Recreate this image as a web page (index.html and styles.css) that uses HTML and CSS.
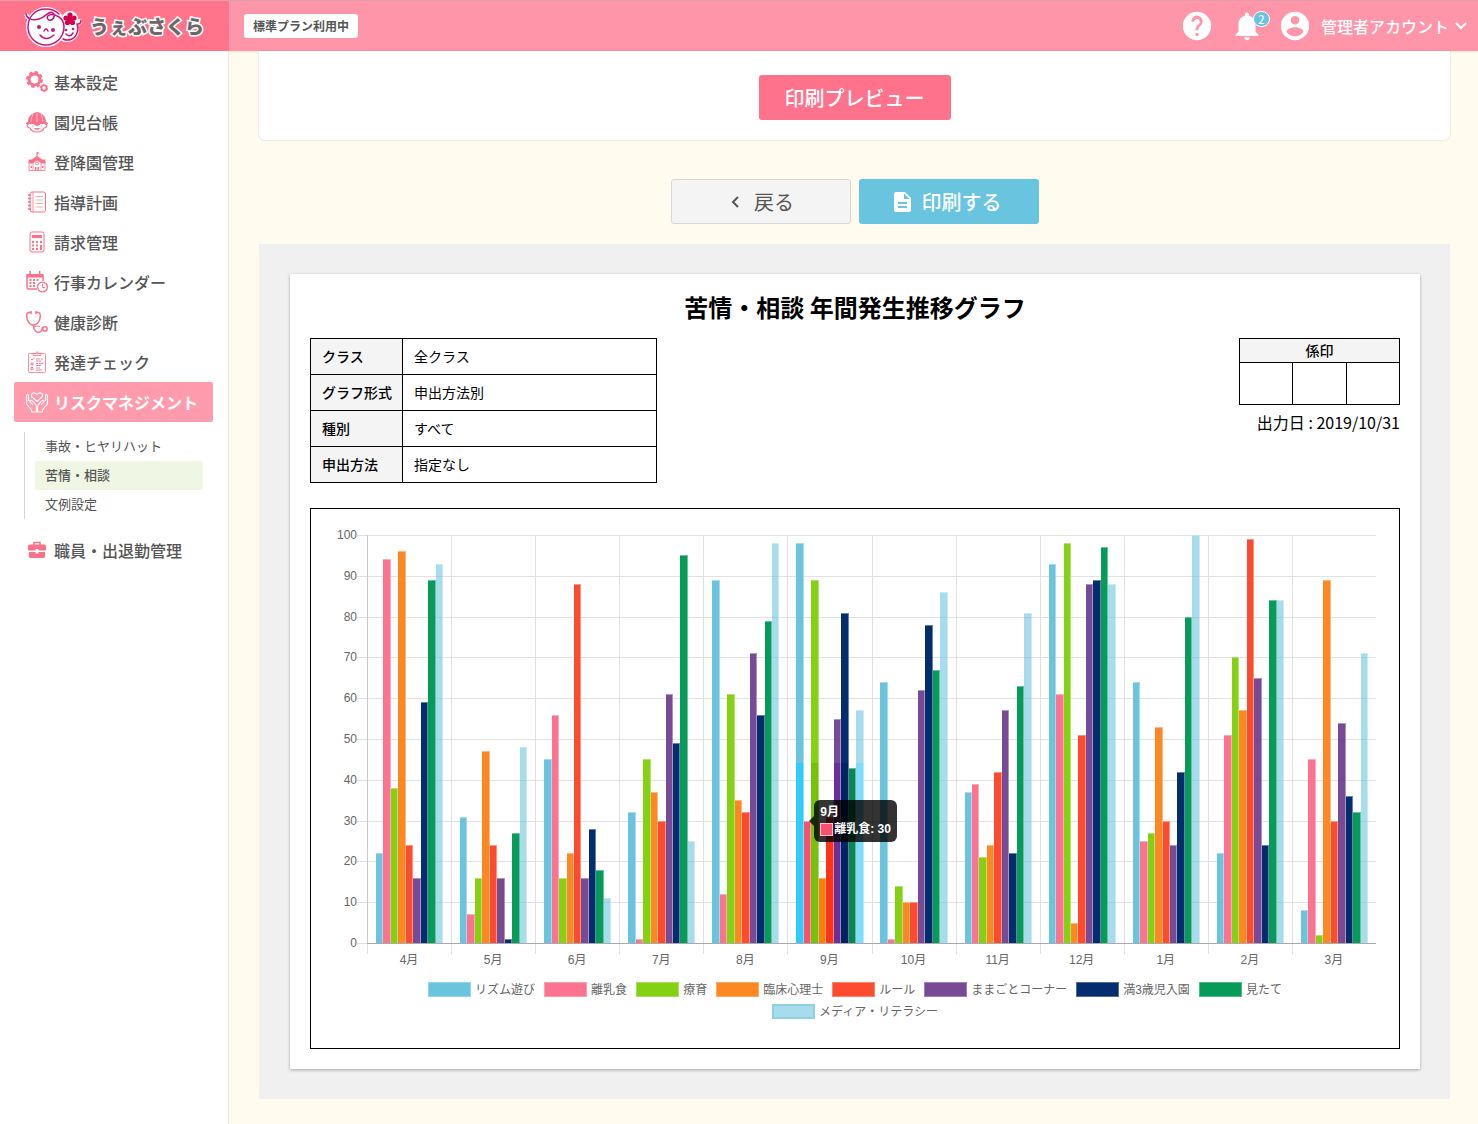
FILE: index.html
```html
<!DOCTYPE html>
<html lang="ja">
<head>
<meta charset="utf-8">
<meta name="viewport" content="width=device-width, initial-scale=1">
<title>苦情・相談 年間発生推移グラフ | うぇぶさくら</title>
<link rel="stylesheet" href="styles.css">
</head>
<body>
<header class="header">
  <a class="brand" href="#">
    <svg class="brand-mark" viewBox="0 0 58 42" aria-hidden="true">
      <g fill="#fff" stroke="#fff" stroke-width="4" stroke-linejoin="round">
        <circle cx="22" cy="22" r="18"/><circle cx="43" cy="25" r="10"/><circle cx="46" cy="14" r="6"/>
        <path d="M2 9q2 6 8 5M50 17q7 4 6-3" fill="none"/>
      </g>
      <g fill="none" stroke="#c4177c" stroke-width="1.5" stroke-linecap="round">
        <path d="M2 9c1 5 7 7 13 5 7-2 10-9 14-6 3 3 0 8-4 7-4-2-1-7 6-5 6 2 9 7 9 12a18 18 0 1 1-36 0c0-9 6-18 18-18 5 0 9 1 13 5"/>
        <path d="M39 34a10 10 0 0 0 14-6c2-4 1-6 0-9M54 19c2 0 3-2 3-4"/>
        <path d="M16 30q6 7 14 0M20 26q2-4 4 0M42 29q4 4 7-1"/>
      </g>
      <circle cx="15" cy="22" r="2" fill="#c4177c"/><circle cx="29" cy="25" r="2" fill="#c4177c"/>
      <circle cx="42" cy="25" r="1.300" fill="#c4177c"/><circle cx="49" cy="24" r="1.300" fill="#c4177c"/>
      <g fill="#d3004c"><circle cx="46" cy="10" r="2.600"/><circle cx="50" cy="13" r="2.600"/><circle cx="48.500" cy="17.500" r="2.600"/><circle cx="43.500" cy="17.500" r="2.600"/><circle cx="42" cy="13" r="2.600"/><circle cx="46" cy="14" r="2.600"/></g>
    </svg>
    <span class="brand-name">うぇぶさくら</span>
  </a>
  <div class="header-bar">
    <span class="plan">標準プラン利用中</span>
    <nav class="tools" aria-label="アカウント">
      <button class="tool tool-help" type="button" aria-label="ヘルプ">
        <svg viewBox="0 0 24 24"><path d="M12 2a10 10 0 1 0 0 20 10 10 0 0 0 0-20zm1 17h-2v-2h2v2zm2.070-7.750-.9.920C13.450 12.900 13 13.500 13 15h-2v-.5c0-1.100.45-2.100 1.170-2.830l1.240-1.260A2 2 0 1 0 10 9H8a4 4 0 1 1 7.070 2.250z"/></svg>
      </button>
      <button class="tool tool-bell" type="button" aria-label="お知らせ">
        <svg viewBox="0 0 24 24"><path d="M12 22a2 2 0 0 0 2-2h-4c0 1.100.9 2 2 2zm6-6v-5c0-3.070-1.630-5.640-4.500-6.320V4a1.500 1.500 0 0 0-3 0v.68C7.640 5.360 6 7.920 6 11v5l-2 2v1h16v-1l-2-2z"/></svg>
        <span class="badge">2</span>
      </button>
      <button class="account" type="button">
        <svg class="account-icon" viewBox="0 0 24 24"><path d="M12 2a10 10 0 1 0 0 20 10 10 0 0 0 0-20zm0 3a3 3 0 1 1 0 6 3 3 0 0 1 0-6zm0 14.200a7.200 7.200 0 0 1-6-3.220c.03-1.990 4-3.080 6-3.080 1.990 0 5.970 1.090 6 3.080a7.200 7.200 0 0 1-6 3.220z"/></svg>
        <span>管理者アカウント</span>
        <svg class="chevron" viewBox="0 0 12 8"><path d="M1 1l5 5 5-5"/></svg>
      </button>
    </nav>
  </div>
</header>

<div class="layout">
  <nav class="sidebar" aria-label="メニュー">
    <a class="menu-item" href="#">
      <svg viewBox="0 0 22 22"><circle cx="8.500" cy="8.500" r="5.500" fill="none" stroke="currentColor" stroke-width="3"/><circle cx="8.500" cy="8.500" r="7.500" fill="none" stroke="currentColor" stroke-width="1.800" stroke-dasharray="3.400 2.490"/><circle cx="18" cy="17" r="2.600" fill="none" stroke="currentColor" stroke-width="1.800"/><circle cx="18" cy="17" r="3.600" fill="none" stroke="currentColor" stroke-width="1" stroke-dasharray="1.800 1.970"/></svg>
      <span>基本設定</span></a>
    <a class="menu-item" href="#">
      <svg viewBox="0 0 22 22"><path d="M2 11C2 5 6 2 11 1c5 1 9 4 9 10l2 1v1H0v-1z" fill="currentColor"/><path d="M7 3q-2 4-2 8M11 2v9M15 3q2 4 2 8" stroke="#fff" stroke-width=".5" fill="none"/><path d="M3 13c-3 0-2 4 1 4 1 3 4 4 7 4s6-1 7-4c3 0 4-4 1-4" fill="none" stroke="currentColor" stroke-width="1.100"/><path d="M8 13l3 2 3-2zM8.500 17.500h5q-2.500 2-5 0M6 15h1.500M14.500 15H16" fill="currentColor" stroke="currentColor" stroke-width=".8"/></svg>
      <span>園児台帳</span></a>
    <a class="menu-item" href="#">
      <svg viewBox="0 0 22 22"><path d="M11 1l3 1-2.500 1v2L16 8.500h3l1 4h-4.500L11 9.500 6.500 12.500H2l1-4h3L10.500 5V1z" fill="currentColor"/><path d="M3 13v6.500h16V13M7 12v7.500M15 12v7.500" fill="none" stroke="currentColor" stroke-width=".8"/><circle cx="11" cy="12.500" r="1.500" fill="none" stroke="currentColor" stroke-width=".8"/><path d="M4.500 15h1.500v2H4.500zM16 15h1.500v2H16zM9 16h1.500v3.500H9zM11.500 16H13v3.500h-1.500z" fill="currentColor"/></svg>
      <span>登降園管理</span></a>
    <a class="menu-item" href="#">
      <svg viewBox="0 0 22 22" fill="none" stroke="currentColor"><rect x="4" y="1" width="15.500" height="20" rx="2"/><path d="M7 1v20" stroke-width=".8"/><path d="M2 4h3M2 7.500h3M2 11h3M2 14.500h3M2 18h3" stroke-width="1.500"/><path d="M9.500 5.500h7.500M9.500 9h7.500M9.500 12.500h7.500M9.500 16h7.500" stroke-width=".6"/></svg>
      <span>指導計画</span></a>
    <a class="menu-item" href="#">
      <svg viewBox="0 0 22 22"><rect x="4" y="1" width="14" height="20" rx="2" fill="none" stroke="currentColor"/><path d="M6 4h10v3H6zM6 10h2v2H6zM10 10h2v2h-2zM14 10h2v2h-2zM6 13.500h2v2H6zM10 13.500h2v2h-2zM6 17h2v2H6zM10 17h2v2h-2zM14 14h2v5h-2z" fill="currentColor"/></svg>
      <span>請求管理</span></a>
    <a class="menu-item" href="#">
      <svg viewBox="0 0 22 22"><path d="M11 18H2.500Q1 18 1 16.500V4h16v6" fill="none" stroke="currentColor" stroke-width="1.500"/><path d="M1 3h16v3.500H1zM3.500 0h1.500v4H3.500zM13 0h1.500v4H13zM3.500 8h2v2h-2zM7 8h2v2H7zM10.500 8h2v2h-2zM3.500 11h2v2h-2zM7 11h2v2H7zM3.500 14h2v2h-2zM7 14h2v2H7z" fill="currentColor"/><circle cx="16.500" cy="16" r="4.900" fill="#fff" stroke="currentColor" stroke-width="1.300"/><path d="M16.500 13v3.500H19" fill="none" stroke="currentColor"/></svg>
      <span>行事カレンダー</span></a>
    <a class="menu-item" href="#">
      <svg viewBox="0 0 22 22" fill="none" stroke="currentColor" stroke-width="1.500"><path d="M4.500 1.500H2.500C0 2 .5 6 1.500 9q2 5 6 5T13.500 9c1-3 1.500-7-1-7.500h-2M5 0v3M10 0v3M7.500 14c0 9 8 9 8.500 4q0-1.500 1-1.500"/><circle cx="19" cy="18" r="2.200"/><path d="M8 16c1-1 4-1 6-.5" stroke-width="1"/></svg>
      <span>健康診断</span></a>
    <a class="menu-item" href="#">
      <svg viewBox="0 0 22 22" fill="none" stroke="currentColor"><rect x="2.500" y="2.500" width="17" height="19" rx="1" stroke-width=".8"/><path d="M7 4.500v-2h2.500l1.500-2 1.500 2H15v2z" stroke-width=".8"/><path d="M5 8l1 1 2-2.500M5 12h2v2H5zM5 16.500h2v2H5zM10 8h4M15 8h2M10 10h5M10 12.500h2M13 12.500h4M10 14.500h5M10 17h4M10 19h6" stroke-width=".9"/></svg>
      <span>発達チェック</span></a>
    <a class="menu-item is-active" href="#" aria-current="true">
      <svg viewBox="0 0 22 22" fill="none" stroke="currentColor" stroke-width="1.100" stroke-linejoin="round"><path d="M11 10.500L6 6C4 3 8 0 11 3.500 14 0 18 3 16 6z"/><path d="M.6 4v9l5 6v2h4.800v-5c0-3-4-6-5-6.500s-2 0-1.500 1L7 14M2.500 10V4Q1.500 3 .6 4M21.400 4v9l-5 6v2h-4.800v-5c0-3 4-6 5-6.500s2 0 1.500 1L15 14M19.500 10V4q1-1 1.900 0"/></svg>
      <span>リスクマネジメント</span></a>
    <div class="submenu">
      <a class="submenu-item" href="#">事故・ヒヤリハット</a>
      <a class="submenu-item is-current" href="#" aria-current="page">苦情・相談</a>
      <a class="submenu-item" href="#">文例設定</a>
    </div>
    <a class="menu-item" href="#">
      <svg viewBox="0 0 22 22"><path d="M8 6V3.500h6V6" fill="none" stroke="currentColor" stroke-width="1.500"/><path d="M3.500 5.500h15A1.500 1.500 0 0 1 20 7v4.500h-7.500V10h-3v1.500H2V7a1.500 1.500 0 0 1 1.500-1.500zM3 13h6.500v1.500h3V13H19v4.500a1.500 1.500 0 0 1-1.500 1.500h-13A1.500 1.500 0 0 1 3 17.500z" fill="currentColor"/></svg>
      <span>職員・出退勤管理</span></a>
  </nav>

  <main class="main">
    <section class="card">
      <button class="btn btn-preview" type="button">印刷プレビュー</button>
    </section>
    <div class="actions">
      <button class="btn btn-back" type="button">
        <svg class="back-icon" viewBox="0 0 8 12"><path d="M7 1L2 6l5 5"/></svg>戻る</button>
      <button class="btn btn-print" type="button">
        <svg class="file-icon" viewBox="0 0 18 20"><path d="M2 0h9l6 6v12q0 2-2 2H2q-2 0-2-2V2q0-2 2-2zm8 1.500V7h5.500zM4 10v2h9v-2zm0 4v2h9v-2z" fill-rule="evenodd"/></svg>印刷する</button>
    </div>

    <section class="preview">
      <article class="sheet">
        <h1 class="title">苦情・相談 年間発生推移グラフ</h1>
        <div class="meta">
          <table class="conditions">
            <tr><th scope="row">クラス</th><td>全クラス</td></tr>
            <tr><th scope="row">グラフ形式</th><td>申出方法別</td></tr>
            <tr><th scope="row">種別</th><td>すべて</td></tr>
            <tr><th scope="row">申出方法</th><td>指定なし</td></tr>
          </table>
          <div class="approval">
            <table class="stamps">
              <tr><th colspan="3">係印</th></tr>
              <tr><td></td><td></td><td></td></tr>
            </table>
            <p class="date">出力日 : 2019/10/31</p>
          </div>
        </div>

        <figure class="chart">
          <div class="chart-grid">
            <ol class="y-axis"><li>100</li><li>90</li><li>80</li><li>70</li><li>60</li><li>50</li><li>40</li><li>30</li><li>20</li><li>10</li><li>0</li></ol>
            <div class="plot">
              <div class="gridlines"><i></i><i></i><i></i><i></i><i></i><i></i><i></i><i></i><i></i><i></i><i></i></div>
              <div class="groups" id="groups"></div>
            </div>
            <ol class="x-axis"><li>4月</li><li>5月</li><li>6月</li><li>7月</li><li>8月</li><li>9月</li><li>10月</li><li>11月</li><li>12月</li><li>1月</li><li>2月</li><li>3月</li></ol>
          </div>
          <ul class="legend">
            <li class="s1">リズム遊び</li><li class="s2">離乳食</li><li class="s3">療育</li><li class="s4">臨床心理士</li><li class="s5">ルール</li><li class="s6">ままごとコーナー</li><li class="s7">満3歳児入園</li><li class="s8">見たて</li><li class="s9">メディア・リテラシー</li>
          </ul>
        </figure>
      </article>
    </section>
  </main>
</div>

<template id="tooltip">
  <div class="tooltip" role="tooltip">
    <div>9月</div>
    <div class="tooltip-row"><span class="tooltip-key"></span>離乳食: 30</div>
  </div>
</template>
<script src="chart.js"></script>
</body>
</html>
```
FILE: styles.css
```css
*, *::before, *::after { box-sizing: border-box; }

body {
  margin: 0;
  min-height: 100vh;
  display: flex;
  flex-direction: column;
  background: #fffbee;
  color: #555;
  font-family: "Noto Sans CJK JP", sans-serif;
  font-size: 16px;
  line-height: 24px;
}

a { color: inherit; text-decoration: none; }
button { border: 0; padding: 0; background: none; font: inherit; color: inherit; cursor: pointer; }
ol, ul { list-style: none; margin: 0; padding: 0; }

/* header */
.header {
  display: flex;
  height: 51px;
  color: #fff;
  background: #ff95a8;
  box-shadow: 0 1px 2px rgba(0, 0, 0, .1);
  border-top: 1px solid #dd9eaa;
}
.brand {
  flex: 0 0 229px;
  display: flex;
  align-items: center;
  gap: 8px;
  padding-left: 24px;
  background: #ff748b;
}
.brand-mark { width: 58px; height: 42px; }
.brand-name {
  font-size: 19px;
  font-weight: 900;
  color: #6e6668;
  -webkit-text-stroke: 3px #fff;
  paint-order: stroke fill;
}
.header-bar {
  flex: 1;
  display: flex;
  align-items: center;
  justify-content: space-between;
  padding: 0 11px 0 15px;
}
.plan {
  height: 24px;
  padding: 0 9px;
  border-radius: 3px;
  background: #fff;
  color: #555;
  font-size: 12px;
  font-weight: 700;
}
.tools { display: flex; align-items: center; gap: 16px; fill: #fff; }
.tool { position: relative; height: 34px; }
.tool svg, .account-icon { display: block; width: 34px; height: 34px; }
.badge {
  position: absolute;
  top: 2px;
  right: -6px;
  width: 17px;
  height: 16px;
  border: 1px solid #fff;
  border-radius: 8px;
  background: #68c4df;
  color: #fff;
  font-size: 11px;
  font-weight: 500;
  line-height: 14px;
  text-align: center;
}
.account { display: flex; align-items: center; margin-left: -2px; }
.account span { margin: 0 6px 0 9px; font-weight: 500; }
.chevron { width: 12px; height: 8px; fill: none; stroke: #fff; stroke-width: 2; }

/* frame */
.layout { flex: 1; display: flex; }
.sidebar {
  flex: 0 0 229px;
  padding: 11px 15px 12px 14px;
  background: #fff;
  border-right: 1px solid #e9e9e9;
}
.menu-item {
  display: flex;
  align-items: center;
  gap: 6px;
  height: 40px;
  padding-left: 12px;
  border-radius: 2px;
  font-weight: 500;
}
.menu-item svg { width: 22px; height: 22px; color: #fb718a; }
.menu-item.is-active { background: #ff9bad; color: #fff; font-weight: 700; }
.menu-item.is-active svg { color: #fff; }
.submenu {
  margin: 10px 10px 11px;
  padding-left: 10px;
  border-left: 1px solid #d5d5d5;
}
.submenu-item {
  display: block;
  height: 29px;
  padding-left: 10px;
  border-radius: 2px;
  font-size: 13px;
  line-height: 27px;
}
.submenu-item.is-current { background: #eff6e4; font-weight: 500; }

.main { flex: 1; min-width: 0; padding: 0 28px 25px 30px; }
.card {
  display: flex;
  justify-content: center;
  padding: 24px 0 20px;
  background: #fff;
  border-radius: 0 0 6px 6px;
  box-shadow: 0 0 2px rgba(0, 0, 0, .2);
}
.btn {
  display: flex;
  align-items: center;
  justify-content: center;
  width: 180px;
  height: 45px;
  border-radius: 3px;
  color: #fff;
  font-size: 20px;
  font-weight: 500;
}
.btn-preview { width: 192px; background: #ff728b; }
.actions { display: flex; justify-content: center; gap: 8px; padding: 39px 0 20px; }
.btn-back { gap: 15px; padding-left: 4px; border: 1px solid #d8d8d8; background: #f4f4f4; color: #555; font-weight: 400; }
.btn-print { gap: 10px; padding-right: 2px; background: #68c4df; }
.back-icon { width: 8px; height: 12px; fill: none; stroke: #555; stroke-width: 2; }
.file-icon { width: 18px; height: 20px; fill: #fff; }

/* printed sheet */
.preview { padding: 30px 30px 30px 31px; background: #f0f0f0; }
.sheet {
  padding: 20px;
  background: #fff;
  color: #000;
  box-shadow: 0 1px 3px rgba(0, 0, 0, .3);
}
.title { margin: 0 0 18px; font-size: 24px; line-height: 26px; font-weight: 700; text-align: center; }
.meta { display: flex; justify-content: space-between; margin-bottom: 25px; }
.meta table { border-collapse: collapse; table-layout: fixed; }
.meta th, .meta td { border: 1px solid #000; padding: 0 0 2px 11px; text-align: left; }
.meta th { background: #f4f4f4; font-weight: 500; }
.conditions { width: 347px; font-size: 14px; }
.conditions th { width: 92px; white-space: nowrap; }
.conditions tr { height: 36px; }
.stamps { width: 161px; font-size: 14px; }
.meta .stamps th { height: 24px; padding: 0 0 2px; line-height: 20px; text-align: center; }
.stamps td { height: 42px; }
.date { margin: 5px 0 0; text-align: right; }

/* chart */
.chart {
  margin: 0;
  padding: 26px 23px 29px 10px;
  border: 1px solid #000;
  color: #666;
  font: 12px/14px "Liberation Sans", "Noto Sans CJK JP", sans-serif;
}
.chart-grid { display: grid; grid-template-columns: 46px 1fr; }
.y-axis { display: flex; flex-direction: column; justify-content: space-between; }
.y-axis li {
  height: 1px;
  padding-right: 10px;
  line-height: 0;
  text-align: right;
  background: linear-gradient(#e0e0e0, #e0e0e0) right / 10px 1px no-repeat;
}
.plot { display: grid; height: 409px; }
.gridlines, .groups { grid-area: 1 / 1; }
.gridlines { display: flex; flex-direction: column; justify-content: space-between; }
.gridlines i { height: 1px; background: #e2e2e2; }
.groups { display: grid; grid-template-columns: repeat(12, 1fr); border-bottom: 1px solid #aaa; }
.group {
  display: flex;
  align-items: flex-end;
  justify-content: center;
  border-left: 1px solid #e0e0e0;
}
.group:first-child { border-color: #c8c8c8; }
.bar {
  position: relative;
  width: 9%;
  background: var(--c);
  box-shadow: inset -1px 1px rgba(255, 255, 255, .4);
}
.group.is-hover .bar { background: linear-gradient(to top, var(--h) 180px, var(--c) 180px); }
.x-axis { grid-column: 2; display: grid; grid-template-columns: repeat(12, 1fr); }
.x-axis li {
  padding-top: 9px;
  text-align: center;
  background: linear-gradient(#e0e0e0, #e0e0e0) left top / 1px 10px no-repeat;
}
.legend {
  display: flex;
  flex-wrap: wrap;
  justify-content: center;
  gap: 7px 9px;
  margin: 15px 27px 0 40px;
}
.legend li { display: flex; align-items: center; gap: 4px; height: 15px; }
.legend li::before {
  content: "";
  width: 43px;
  height: 15px;
  background: var(--c);
  border: 1px solid rgba(255, 255, 255, .3);
}
.legend .s9::before { border: 2px solid #8fd0e3; }

.s1 { --c: #6bc4de; --h: #2ecbfb; }
.s2 { --c: #fb738e; --h: #f8516f; }
.s3 { --c: #84d012; --h: #74c20a; }
.s4 { --c: #fd8722; --h: #ff7c0b; }
.s5 { --c: #fc4b2e; --h: #ff3315; }
.s6 { --c: #784a96; --h: #6b2f98; }
.s7 { --c: #032d6e; --h: #002363; }
.s8 { --c: #069b59; --h: #088752; }
.s9 { --c: rgba(107, 196, 222, .6); --h: #80dcfb; }

.tooltip {
  position: absolute;
  z-index: 1;
  top: 0;
  left: 100%;
  margin-left: 3px;
  padding: 4px 6px;
  border-radius: 6px;
  background: rgba(0, 0, 0, .8);
  color: #fff;
  font-weight: 700;
  line-height: 17px;
  white-space: nowrap;
  transform: translateY(-50%);
}
.tooltip::before {
  content: "";
  position: absolute;
  top: 50%;
  left: -5px;
  margin-top: -5px;
  border: 5px solid transparent;
  border-left: 0;
  border-right-color: rgba(0, 0, 0, .8);
}
.tooltip-row { display: flex; align-items: center; gap: 1px; }
.tooltip-key { width: 13px; height: 13px; border: 1px solid #ffc0cb; background: #f8516f; }
```
FILE: chart.js
```js
// One row per month (April to March), one value per series.
const months = [
  [22, 94, 38, 96, 24, 16, 59, 89, 93],
  [31, 7, 16, 47, 24, 16, 1, 27, 48],
  [45, 56, 16, 22, 88, 16, 28, 18, 11],
  [32, 1, 45, 37, 30, 61, 49, 95, 25],
  [89, 12, 61, 35, 32, 71, 56, 79, 98],
  [98, 30, 89, 16, 31, 55, 81, 43, 57],
  [64, 1, 14, 10, 10, 62, 78, 67, 86],
  [37, 39, 21, 24, 42, 57, 22, 63, 81],
  [93, 61, 98, 5, 51, 88, 89, 97, 88],
  [64, 25, 27, 53, 30, 24, 42, 80, 100],
  [22, 51, 70, 57, 99, 65, 24, 84, 84],
  [8, 45, 2, 89, 30, 54, 36, 32, 71]
];
const hovered = { month: 5, series: 1 };
const groups = document.getElementById('groups');

months.forEach((values, m) => {
  const group = document.createElement('div');
  group.className = m === hovered.month ? 'group is-hover' : 'group';
  values.forEach((value, s) => {
    const bar = document.createElement('div');
    bar.className = `bar s${s + 1}`;
    bar.style.height = `${value}%`;
    if (m === hovered.month && s === hovered.series) {
      bar.append(document.getElementById('tooltip').content.cloneNode(true));
    }
    group.append(bar);
  });
  groups.append(group);
});
```
